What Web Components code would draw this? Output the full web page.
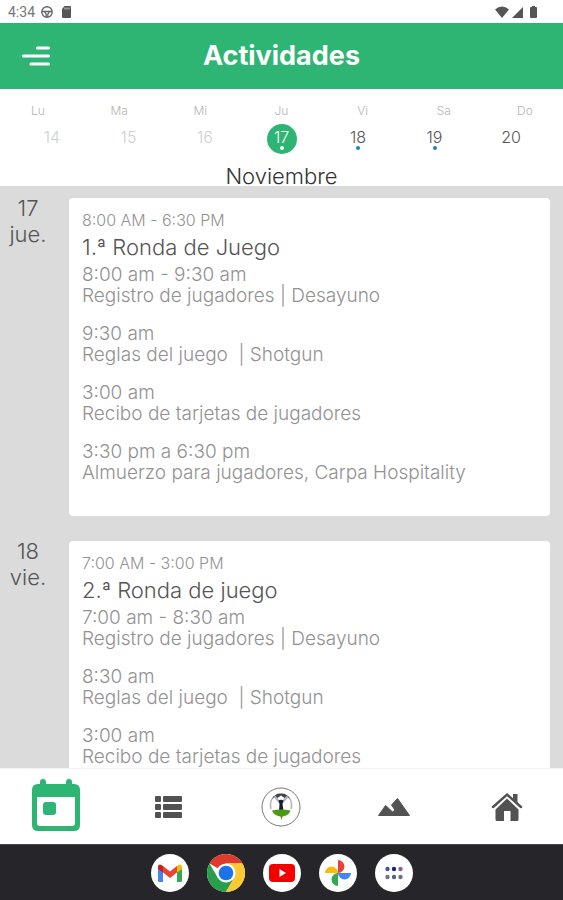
<!DOCTYPE html>
<html lang="es">
<head>
<meta charset="utf-8">
<meta name="viewport" content="width=device-width, initial-scale=1">
<title>Actividades</title>
<style>
  html, body {
    margin: 0;
    height: 100%;
  }
  body {
    font-family: Inter, "Open Sans", sans-serif;
    font-weight: 300;
    background: #fff;
    color: #555;
  }
</style>
</head>
<body>
<agenda-app>
  <status-bar slot="top" time="4:34"></status-bar>
  <app-header slot="top">Actividades</app-header>
  <week-strip slot="top" month="Noviembre" first="14" selected="17" marked="17,18,19"></week-strip>

  <day-entry day="17" weekday="jue." hours="8:00 AM - 6:30 PM" heading="1.ª Ronda de Juego">
    <p>8:00 am - 9:30 am<br>Registro de jugadores | Desayuno</p>
    <p>9:30 am<br>Reglas del juego&nbsp; | Shotgun</p>
    <p>3:00 am<br>Recibo de tarjetas de jugadores</p>
    <p>3:30 pm a 6:30 pm<br>Almuerzo para jugadores, Carpa Hospitality</p>
  </day-entry>
  <day-entry day="18" weekday="vie." hours="7:00 AM - 3:00 PM" heading="2.ª Ronda de juego">
    <p>7:00 am - 8:30 am<br>Registro de jugadores | Desayuno</p>
    <p>8:30 am<br>Reglas del juego&nbsp; | Shotgun</p>
    <p>3:00 am<br>Recibo de tarjetas de jugadores</p>
  </day-entry>

  <tab-bar slot="bottom"></tab-bar>
  <app-dock slot="bottom"></app-dock>
</agenda-app>

<script>
// Shared base: each element only has to return its markup from template()
class BaseElement extends HTMLElement {
  constructor() {
    super();
    this.attachShadow({ mode: 'open' });
  }

  connectedCallback() {
    this.shadowRoot.innerHTML = this.template();
  }
}

class AgendaApp extends BaseElement {
  template() {
    return `
      <style>
        :host {
          display: flex;
          flex-direction: column;
          height: 100vh;
        }
        main {
          flex: 1;
          min-height: 0;
          overflow: hidden;
          background: #dbdbdb;
        }
      </style>
      <slot name="top"></slot>
      <main><slot></slot></main>
      <slot name="bottom"></slot>
    `;
  }
}

class StatusBar extends BaseElement {
  template() {
    return `
      <style>
        :host {
          display: flex;
          align-items: center;
          justify-content: space-between;
          height: 23px;
          padding: 0 25px 0 8px;
          font: 400 14px Roboto, sans-serif;
          color: #777;
        }
        div {
          display: flex;
          align-items: center;
          gap: 6px;
        }
        .right { gap: 3px; }
        svg { display: block; fill: #555; }
      </style>
      <div>
        <span>${this.getAttribute('time')}</span>
        <svg width="12" height="12" viewBox="0 0 12 12">
          <circle cx="6" cy="6" r="5.2" fill="none" stroke="#666" stroke-width="1.4"/>
          <path d="M1 5.5h10M3.5 5.5l1.7 2.8V11M8.5 5.5L6.8 8.3V11" fill="none" stroke="#666" stroke-width="1.3"/>
        </svg>
        <svg width="14" height="12" viewBox="0 0 14 12">
          <path d="M5.5 0h5.5q1 0 1 1v10q0 1-1 1H4q-1 0-1-1V3z"/>
          <path d="M6 1.5v2M8 1.5v2M10 1.5v2" stroke="#ddd" stroke-width=".9"/>
        </svg>
      </div>
      <div class="right">
        <svg width="14" height="12" viewBox="0 0 14 12"><path d="M0 3.5Q7-2.5 14 3.5L7 12z"/></svg>
        <svg width="11" height="12" viewBox="0 0 11 12"><path d="M11 1v11H0z"/></svg>
        <svg width="12" height="12" viewBox="0 0 12 12"><path d="M6 0h3v1h1q1 0 1 1v9q0 1-1 1H5q-1 0-1-1V2q0-1 1-1h1z"/></svg>
      </div>
    `;
  }
}

class AppHeader extends BaseElement {
  template() {
    return `
      <style>
        :host {
          display: grid;
          grid-template-columns: 72px 1fr 72px;
          align-items: center;
          height: 66px;
          background: #2fb573;
          color: #fff;
        }
        button {
          justify-self: center;
          padding: 0;
          border: 0;
          background: none;
        }
        svg { display: block; }
        h1 {
          margin: 0;
          font-size: 27px;
          font-weight: 700;
          line-height: 32px;
          text-align: center;
        }
      </style>
      <button aria-label="Menú">
        <svg width="30" height="22" viewBox="0 0 30 22" stroke="#fff" stroke-width="3.2" stroke-linecap="round">
          <path d="M16.5 3H27.5M2.5 11H27.5M10 19H27.5"/>
        </svg>
      </button>
      <h1><slot></slot></h1>
    `;
  }
}

class WeekStrip extends BaseElement {
  template() {
    const first = Number(this.getAttribute('first'));
    const selected = Number(this.getAttribute('selected'));
    const marked = this.getAttribute('marked').split(',').map(Number);
    const names = ['Lu', 'Ma', 'Mi', 'Ju', 'Vi', 'Sa', 'Do'];

    const days = names.map((_, i) => {
      const n = first + i;
      const cls = n < selected ? 'past' : n === selected ? 'selected' : '';
      return `<button class="${cls}">${n}${marked.includes(n) ? '<i></i>' : ''}</button>`;
    });

    return `
      <style>
        :host {
          display: block;
          padding-top: 14px;
          background: #fff;
        }
        .names, .days {
          display: flex;
          justify-content: space-between;
        }
        .names {
          padding: 0 28px;
          font-size: 12px;
          line-height: 16px;
          color: #b4b4b4;
        }
        .names span {
          width: 20px;
          text-align: center;
        }
        .days {
          padding: 5px 37px 0;
        }
        button {
          display: flex;
          flex-direction: column;
          align-items: center;
          width: 30px;
          height: 30px;
          padding: 4px 0 0;
          border: 0;
          border-radius: 50%;
          background: none;
          font: inherit;
          font-size: 16px;
          line-height: 18px;
          color: #555;
        }
        .past { color: #ccd0d4; }
        .selected {
          background: #2fb573;
          color: #fff;
        }
        i {
          width: 4px;
          height: 4px;
          border-radius: 50%;
          background: #1a86bd;
        }
        .selected i { background: #fff; }
        h2 {
          margin: 0;
          padding-top: 12px;
          font-size: 22px;
          font-weight: 300;
          line-height: 20px;
          text-align: center;
          color: #333;
        }
      </style>
      <div class="names">${names.map(n => `<span>${n}</span>`).join('')}</div>
      <div class="days">${days.join('')}</div>
      <h2>${this.getAttribute('month')}</h2>
    `;
  }
}

class DayEntry extends BaseElement {
  template() {
    return `
      <style>
        :host {
          display: grid;
          grid-template-columns: 56px 1fr;
          column-gap: 13px;
          padding: 9px 13px 13px 0;
        }
        .date {
          font-size: 22px;
          line-height: 26px;
          text-align: center;
        }
        .date span { display: block; }
        article {
          margin-top: 3px;
          padding: 10px 13px 33px;
          border-radius: 4px;
          background: #fff;
        }
        .hours {
          font-size: 16px;
          line-height: 24px;
          color: #929292;
        }
        h3 {
          margin: 0;
          font-size: 22px;
          font-weight: 300;
          line-height: 30px;
        }
        .body {
          display: flex;
          flex-direction: column;
          gap: 17px;
          margin-top: 2px;
          font-size: 19px;
          line-height: 21px;
          color: #929292;
        }
        ::slotted(p) { margin: 0; }
      </style>
      <div class="date">
        <span>${this.getAttribute('day')}</span>
        <span>${this.getAttribute('weekday')}</span>
      </div>
      <article>
        <div class="hours">${this.getAttribute('hours')}</div>
        <h3>${this.getAttribute('heading')}</h3>
        <div class="body"><slot></slot></div>
      </article>
    `;
  }
}

class TabBar extends BaseElement {
  template() {
    return `
      <style>
        :host {
          display: grid;
          grid-template-columns: repeat(5, 1fr);
          height: 75px;
          border-top: 1px solid #f2f2f2;
          background: #fff;
        }
        button {
          display: grid;
          place-items: center;
          padding: 0;
          border: 0;
          background: none;
        }
        svg { display: block; fill: #525252; }
      </style>
      <button aria-label="Calendario">
        <svg width="48" height="58" viewBox="0 0 48 58">
          <path fill="#2fb573" fill-rule="evenodd" d="M8 4a3 3 0 0 1 6 0v2h20V4a3 3 0 0 1 6 0v2h2q6 0 6 6v35q0 6-6 6H6q-6 0-6-6V12q0-6 6-6h2zM5 19v26q0 3 3 3h32q3 0 3-3V19z"/>
          <rect x="11" y="24" width="13" height="13" rx="3" fill="#2fb573"/>
        </svg>
      </button>
      <button aria-label="Lista">
        <svg width="28" height="24" viewBox="0 0 28 24">
          <rect x="0" y="1" width="6" height="6" rx="1"/><rect x="8" y="1" width="19" height="6" rx="1"/>
          <rect x="0" y="9" width="6" height="6" rx="1"/><rect x="8" y="9" width="19" height="6" rx="1"/>
          <rect x="0" y="17" width="6" height="6" rx="1"/><rect x="8" y="17" width="19" height="6" rx="1"/>
        </svg>
      </button>
      <button aria-label="Club">
        <svg width="40" height="40" viewBox="0 0 40 40">
          <circle cx="20" cy="20" r="19" fill="#fff" stroke="#777" stroke-width="1"/>
          <path d="M10 22A12.5 12.5 0 0 1 13 9.5M30 22A12.5 12.5 0 0 0 27 9.5" fill="none" stroke="#b9b9b9" stroke-width="1.6"/>
          <path d="M11 12Q14 6 20 6.5 26 6 29 12L26 9.5 23.5 11 20 8.5 16.5 11 14 9.5z" fill="#444"/>
          <path d="M13.5 9.5L18.5 15M26.5 9.5L21.5 15" stroke="#a9b3c4" stroke-width="2.4"/>
          <path d="M17.5 13.5Q20 12 22.5 13.5L21.5 17 22.5 24H18L18.5 17z" fill="#151c33"/>
          <path d="M11 23.5Q20 21.5 29.5 23.5 28 28.5 21.5 29.5L20.5 33 19.5 29.5Q12.5 28.5 11 23.5z" fill="#4d9a12"/>
        </svg>
      </button>
      <button aria-label="Galería">
        <svg width="32" height="20" viewBox="0 0 32 20">
          <path d="M.5 18.5L7.5 8.5 11 11.5 14.5 15 17 13 13.5 8 19.5 1.5 31.5 18.5z" stroke="#525252" stroke-linejoin="round"/>
        </svg>
      </button>
      <button aria-label="Inicio">
        <svg width="32" height="30" viewBox="0 0 32 30">
          <path d="M16 6.5L27.5 17.5V27.5Q27.5 29 26 29H19.5V19H13V29H6Q4.5 29 4.5 27.5V17.5z"/>
          <path d="M22 2h4.5v10L22 7.5z"/>
          <path d="M2 15L16 2.5 30 15" fill="none" stroke="#525252" stroke-width="2.4" stroke-linecap="round"/>
        </svg>
      </button>
    `;
  }
}

class AppDock extends BaseElement {
  template() {
    return `
      <style>
        :host {
          display: flex;
          align-items: center;
          justify-content: center;
          gap: 18px;
          height: 55px;
          border-top: 1px solid #444;
          background: #26262a;
        }
        button {
          display: grid;
          place-items: center;
          width: 38px;
          height: 38px;
          padding: 0;
          border: 0;
          border-radius: 50%;
          background: #fff;
        }
        svg { display: block; }
      </style>
      <button aria-label="Gmail">
        <svg width="26" height="20" viewBox="0 0 26 20">
          <path d="M1 4.5L6 8V19H2.5Q1 19 1 17.5z" fill="#4285f4"/>
          <path d="M25 4.5L20 8V19H23.5Q25 19 25 17.5z" fill="#34a853"/>
          <path d="M20 3L21.5 2Q25 .5 25 4.5V6L20 9.5z" fill="#fbbc04"/>
          <path d="M6 3L4.5 2Q1 .5 1 4.5V6L6 9.5z" fill="#c5221f"/>
          <path d="M6 3L13 8.5 20 3V9.5L13 15 6 9.5z" fill="#ea4335"/>
        </svg>
      </button>
      <button aria-label="Chrome">
        <svg width="38" height="38" viewBox="0 0 38 38">
          <path d="M19 19L2.55 9.5A19 19 0 0 1 35.45 9.5H19z" fill="#de3b2c"/>
          <path d="M2.55 9.5A19 19 0 0 0 19 38L27.2 23.75 19 19 10.8 23.75z" fill="#2a9f4b"/>
          <path d="M35.45 9.5A19 19 0 0 1 19 38L27.2 23.75 19 19V9.5z" fill="#fcc934"/>
          <circle cx="19" cy="19" r="9.5" fill="#fff"/>
          <circle cx="19" cy="19" r="7.3" fill="#1a73e8"/>
        </svg>
      </button>
      <button aria-label="YouTube">
        <svg width="26" height="18" viewBox="0 0 26 18">
          <rect width="26" height="18" rx="4" fill="#f40000"/>
          <path d="M10.5 5L17 9 10.5 13z" fill="#fff"/>
        </svg>
      </button>
      <button aria-label="Fotos">
        <svg width="28" height="28" viewBox="0 0 28 28">
          <path d="M14 1A6.5 6.5 0 0 1 14 14z" fill="#ea4335"/>
          <path d="M27 14A6.5 6.5 0 0 1 14 14z" fill="#4285f4"/>
          <path d="M14 27A6.5 6.5 0 0 1 14 14z" fill="#34a853"/>
          <path d="M1 14A6.5 6.5 0 0 1 14 14z" fill="#fbbc04"/>
        </svg>
      </button>
      <button aria-label="Aplicaciones">
        <svg width="20" height="14" viewBox="0 0 20 14">
          <circle cx="3.5" cy="3" r="2.2" fill="#4a558f"/>
          <circle cx="10" cy="3" r="2.2" fill="#1b2385"/>
          <circle cx="16.5" cy="3" r="2.2" fill="#94617f"/>
          <circle cx="3.5" cy="11" r="2.2" fill="#6c7488"/>
          <circle cx="10" cy="11" r="2.2" fill="#5c6284"/>
          <circle cx="16.5" cy="11" r="2.2" fill="#6c7090"/>
        </svg>
      </button>
    `;
  }
}

customElements.define('agenda-app', AgendaApp);
customElements.define('status-bar', StatusBar);
customElements.define('app-header', AppHeader);
customElements.define('week-strip', WeekStrip);
customElements.define('day-entry', DayEntry);
customElements.define('tab-bar', TabBar);
customElements.define('app-dock', AppDock);
</script>
</body>
</html>
